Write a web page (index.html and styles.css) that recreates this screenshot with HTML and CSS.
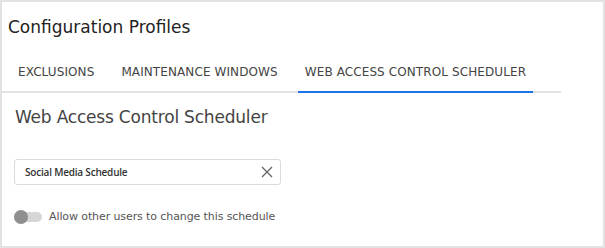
FILE: index.html
```html
<!DOCTYPE html>
<html lang="en">
<head>
  <meta charset="UTF-8" />
  <meta name="viewport" content="width=device-width, initial-scale=1.0"/>
  <title>Configuration Profiles</title>
  <link rel="stylesheet" href="styles.css">
</head>
<body>
  <div class="frame">
    <h1 class="page-title">Configuration Profiles</h1>

    <div class="tabs">
      <div class="tab">Exclusions</div>
      <div class="tab">Maintenance Windows</div>
      <div class="tab active">Web Access Control Scheduler</div>
    </div>

    <div class="panel">
      <h2 class="panel-title">Web Access Control Scheduler</h2>

      <div class="field">
        <input type="text" value="Social Media Schedule" spellcheck="false" />
        <button class="clear" aria-label="Clear">
          <svg width="12" height="12" viewBox="0 0 12 12">
            <path d="M1 1L11 11M11 1L1 11" stroke="#666" stroke-width="1.4" fill="none" />
          </svg>
        </button>
      </div>

      <label class="switch-row">
        <span class="switch"><span class="knob"></span></span>
        <span class="switch-label">Allow other users to change this schedule</span>
      </label>
    </div>
  </div>
</body>
</html>
```

FILE: styles.css
```css
* {
  margin: 0;
  padding: 0;
  box-sizing: border-box;
  font-family: 'DejaVu Sans', sans-serif;
}

body {
  background: #fff;
}

.frame {
  width: 605px;
  height: 248px;
  border: 2px solid #e2e2e2;
  background: #fff;
}

.page-title {
  font-size: 17px;
  font-weight: 400;
  color: #222;
  line-height: 20px;
  padding: 15px 0 0 6px;
}

.tabs {
  display: flex;
  gap: 13px;
  width: 559px;
  margin-top: 27px;
  padding-left: 9px;
  border-bottom: 2px solid #e2e2e2;
}

.tab {
  padding: 0 7px 11px;
  font-size: 12px;
  line-height: 16px;
  letter-spacing: 0.1px;
  text-transform: uppercase;
  color: #444;
}

.tab.active {
  border-bottom: 2px solid #1a73e8;
  margin-bottom: -2px;
}

.panel {
  padding: 12px 12px 0;
}

.panel-title {
  font-size: 17px;
  font-weight: 400;
  letter-spacing: -0.2px;
  color: #444;
  line-height: 24px;
  padding-left: 1px;
}

.field {
  position: relative;
  width: 267px;
  margin-top: 30px;
}

.field input {
  width: 100%;
  height: 26px;
  border: 1px solid #dcdcdc;
  border-radius: 3px;
  padding: 0 30px 0 10px;
  font-family: 'Open Sans', sans-serif;
  font-size: 10px;
  font-weight: 600;
  letter-spacing: -0.2px;
  color: #333;
  outline: none;
}

.clear {
  position: absolute;
  right: 8px;
  top: 7px;
  border: 0;
  background: none;
  line-height: 0;
}

.switch-row {
  display: flex;
  align-items: center;
  gap: 7px;
  margin-top: 25px;
}

.switch {
  position: relative;
  width: 28px;
  height: 10px;
  border-radius: 5px;
  background: #d6d6d6;
}

.knob {
  position: absolute;
  left: 0;
  top: -2px;
  width: 14px;
  height: 14px;
  border-radius: 50%;
  background: #8f8f8f;
}

.switch-label {
  font-size: 11px;
  letter-spacing: -0.1px;
  color: #555;
}
```
